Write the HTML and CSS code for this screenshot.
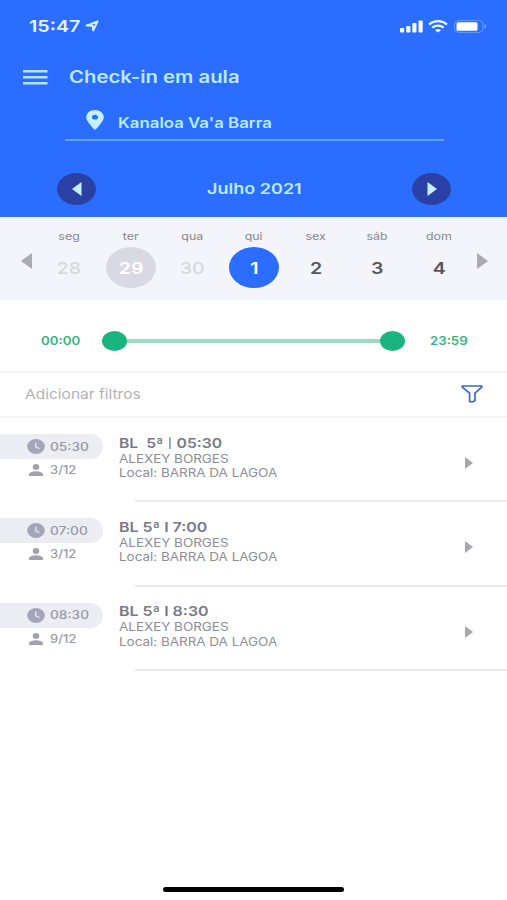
FILE: index.html
```html
<!DOCTYPE html>
<html lang="pt-BR">
<head>
<meta charset="utf-8">
<title>Check-in em aula</title>
<link rel="stylesheet" href="styles.css">
</head>
<body>
<svg width="0" height="0" class="defs">
  <symbol id="clock" viewBox="0 0 18 15" preserveAspectRatio="none"><ellipse cx="9" cy="7.5" rx="8.8" ry="7.4" fill="#a5a5ba"/><path d="M8.7 3.4v4.5l3.7 1.8" fill="none" stroke="#e4e5ee" stroke-width="1.4"/></symbol>
  <symbol id="person" viewBox="0 0 14 12"><ellipse cx="7" cy="3" rx="3.3" ry="2.9"/><path d="M0 12v-1.7C0 8.2 4.400 7.200 7 7.200s7 1 7 3.100V12z"/></symbol>
</svg>
<div class="phone">
  <header class="top">
    <div class="status">
      <span class="clock-time"><span class="t">15:47</span></span>
      <svg class="location" viewBox="0 0 14 12"><path d="M1.500 5.600 12.600 1.400 8.200 10.400 7.800 5.800z" fill="none" stroke="#d5efff" stroke-width="2" stroke-linejoin="round"/></svg>
      <svg class="signal" viewBox="0 0 24 13" fill="#f4faff"><rect x="0" y="8" width="4.200" height="4.500" rx="1"/><rect x="6.200" y="6" width="4.200" height="6.500" rx="1"/><rect x="12.300" y="3" width="4.200" height="9.500" rx="1"/><rect x="18.500" y="0.500" width="4.200" height="12" rx="1"/></svg>
      <svg class="wifi" viewBox="0 0 20 13" fill="none" stroke="#e9f6ff" stroke-width="2.300"><path d="M1 4.500C6 .1 14 .1 19 4.500M4.300 7.700c3.300-2.700 8.100-2.700 11.400 0"/><path d="M7 10.200c1.800-1.500 4.200-1.500 6 0L10 12.600z" fill="#e9f6ff" stroke="none"/></svg>
      <svg class="battery" viewBox="0 0 33 13"><rect x=".6" y=".6" width="28.500" height="11.800" rx="4" fill="none" stroke="#639bfb"/><rect x="2.500" y="2.200" width="21" height="8.600" rx="1.500" fill="#fff"/><path d="M30.500 4.300c2 .5 2 3.900 0 4.400z" fill="#79a8fb"/></svg>
    </div>
    <div class="title-row">
      <svg class="menu" viewBox="0 0 25 15" fill="#b0e5fb"><path d="M0 0h24.500v2.500H0zM0 6h24.500v2.500H0zM0 12h24.500v2.500H0z"/></svg>
      <h1 class="t">Check-in em aula</h1>
    </div>
    <div class="place">
      <svg class="pin" viewBox="0 0 18 20"><path fill="#c3efff" fill-rule="evenodd" d="M9 0C4 0 .2 3.200.2 7.300.2 12 9 20 9 20s8.800-8 8.800-12.700C17.800 3.200 14 0 9 0zm0 4.800c1.800 0 3.100 1 3.100 2.400S10.800 9.600 9 9.600 5.900 8.600 5.900 7.200 7.200 4.800 9 4.800z"/></svg>
      <span class="t">Kanaloa Va'a Barra</span>
    </div>
    <div class="month">
      <button><svg viewBox="0 0 10 14"><path d="M9.500 0v14L0 7z"/></svg></button>
      <span class="t">Julho 2021</span>
      <button><svg viewBox="0 0 10 14"><path d="M.5 0v14L10 7z"/></svg></button>
    </div>
  </header>
  <section class="week">
    <svg class="arrow" viewBox="0 0 11 16"><path d="M11 0v16L0 8z"/></svg>
    <div class="days">
      <div class="day past"><small>seg</small><b><span>28</span></b></div>
      <div class="day marked"><small>ter</small><b><span>29</span></b></div>
      <div class="day past"><small>qua</small><b><span>30</span></b></div>
      <div class="day today"><small>qui</small><b><span>1</span></b></div>
      <div class="day"><small>sex</small><b><span>2</span></b></div>
      <div class="day"><small>sáb</small><b><span>3</span></b></div>
      <div class="day"><small>dom</small><b><span>4</span></b></div>
    </div>
    <svg class="arrow" viewBox="0 0 11 16"><path d="M0 0v16l11-8z"/></svg>
  </section>
  <section class="range">
    <span class="t">00:00</span>
    <div class="slider"><i></i><i></i></div>
    <span class="t">23:59</span>
  </section>
  <section class="filters">
    <span class="t">Adicionar filtros</span>
    <svg class="funnel" viewBox="0 0 22 18"><path d="M1.200 1h19.600v1.200l-6.800 6v7.600l-3 1.200-2.400-.6V8.200L1.200 2.200z" fill="none" stroke="#3b66cf" stroke-width="1.700" stroke-linejoin="round"/></svg>
  </section>
  <main>
    <article>
      <div class="meta">
        <div class="pill"><svg><use href="#clock"/></svg><span class="t">05:30</span></div>
        <div class="people"><svg><use href="#person"/></svg><span class="t">3/12</span></div>
      </div>
      <div class="info">
        <h2><span class="t">BL&nbsp; 5ª <span class="bar">|</span> 05:30</span></h2>
        <p><span class="t">ALEXEY BORGES</span></p>
        <p><span class="t">Local: BARRA DA LAGOA</span></p>
      </div>
      <svg class="go" viewBox="0 0 8 12"><path d="M0 0v12l8-6z"/></svg>
    </article>
    <article>
      <div class="meta">
        <div class="pill"><svg><use href="#clock"/></svg><span class="t">07:00</span></div>
        <div class="people"><svg><use href="#person"/></svg><span class="t">3/12</span></div>
      </div>
      <div class="info">
        <h2 class="wide"><span class="t">BL 5ª I 7:00</span></h2>
        <p><span class="t">ALEXEY BORGES</span></p>
        <p><span class="t">Local: BARRA DA LAGOA</span></p>
      </div>
      <svg class="go" viewBox="0 0 8 12"><path d="M0 0v12l8-6z"/></svg>
    </article>
    <article>
      <div class="meta">
        <div class="pill"><svg><use href="#clock"/></svg><span class="t">08:30</span></div>
        <div class="people"><svg><use href="#person"/></svg><span class="t">9/12</span></div>
      </div>
      <div class="info">
        <h2 class="wide"><span class="t">BL 5ª I 8:30</span></h2>
        <p><span class="t">ALEXEY BORGES</span></p>
        <p><span class="t">Local: BARRA DA LAGOA</span></p>
      </div>
      <svg class="go" viewBox="0 0 8 12"><path d="M0 0v12l8-6z"/></svg>
    </article>
  </main>
  <div class="home"></div>
</div>
</body>
</html>
```
FILE: styles.css
```css
* { box-sizing: border-box; }
body { margin: 0; background: #fff; font-family: Inter, "Open Sans", sans-serif; }
h1, h2, p { margin: 0; }
svg { display: block; flex: none; }
.defs { position: absolute; }
.t { display: inline-block; white-space: nowrap; transform: scaleX(var(--sx, 1.15)); transform-origin: left center; }
.phone { width: 507px; height: 900px; display: flex; flex-direction: column; overflow: hidden; }

.top { height: 216.500px; background: #2b6dff; color: #b9eaff; flex: none; }
.status { height: 52px; padding: 0 20px 0 29px; display: flex; align-items: center; }
.clock-time { width: 56px; font-size: 16.500px; font-weight: 600; color: #e3f4ff; --sx: 1.19; }
.location { width: 14px; height: 12px; }
.signal { width: 24px; height: 13px; margin-left: auto; }
.wifi { width: 20px; height: 13px; margin-left: 4px; }
.battery { width: 33px; height: 13px; margin-left: 6px; }
.title-row { height: 50px; padding-left: 23px; display: flex; align-items: center; }
.menu { width: 25px; height: 15px; margin-right: 21px; }
h1 { font-size: 17px; line-height: 24px; font-weight: 600; --sx: 1.195; }
.place { width: 379px; height: 39px; margin-left: 65px; padding: 1px 0 2px 21px; border-bottom: 2px solid #62a2fc; display: flex; align-items: center; font-size: 14px; font-weight: 600; --sx: 1.2; }
.place .t { padding-top: 4px; }
.pin { width: 18px; height: 20px; margin-right: 14px; }
.month { height: 75px; padding: 21px 56px 0 57px; display: flex; align-items: center; justify-content: space-between; font-size: 15px; font-weight: 600; --sx: 1.2; }
.month .t { transform-origin: center; padding-bottom: 2px; }
.month button { width: 39px; height: 32px; padding: 0; border: 0; border-radius: 50%; background: #2b40a4; display: grid; place-items: center; }
.month svg { width: 10px; height: 14px; fill: #c4f0ff; }

.week { height: 83.500px; padding: 0 19px 0 21px; background: #f4f5fb; border-bottom: 1px solid #f9f9fc; display: flex; align-items: center; flex: none; }
.arrow { width: 11px; height: 16px; fill: #a9abb4; margin-top: 7px; }
.days { width: 431px; height: 83px; margin: 0 7px 0 6.500px; display: grid; grid-template-columns: repeat(7, 61.600px); flex: none; }
.day { display: flex; flex-direction: column; align-items: center; padding-top: 13px; color: #55575f; }
.day small { font-size: 10.500px; line-height: 16px; color: #85868e; transform: scaleX(1.18); }
.day b { width: 50px; height: 41px; margin-top: 2px; border-radius: 50%; display: grid; place-items: center; font-size: 16px; font-weight: 600; }
.day b span { transform: scaleX(1.22); }
.past b { color: #d6d7de; font-weight: 500; }
.marked b { background: #d9d9e4; color: #fff; }
.today b { background: #2b6dff; color: #fff; }

.range { height: 71px; padding: 11px 0 0 41px; display: flex; align-items: center; color: #35b383; font-size: 11.500px; font-weight: 600; --sx: 1.15; flex: none; }
.range > .t { width: 61px; margin-top: -1px; }
.range > .t:last-child { margin-left: 24.500px; }
.slider { width: 303px; height: 20px; display: flex; justify-content: space-between; background: linear-gradient(#9bdbc3, #9bdbc3) center / 280px 4px no-repeat; }
.slider i { width: 25px; height: 20px; border-radius: 50%; background: #19b47f; }

.filters { height: 47px; border-top: 2px solid #f5f5f7; border-bottom: 2px solid #f5f5f7; padding: 0 24px 0 25px; display: flex; align-items: center; justify-content: space-between; color: #b1b1b6; font-size: 13.500px; flex: none; }
.filters .t { padding-bottom: 1px; }
.funnel { width: 22px; height: 18px; margin-top: -1px; }

main { flex: 1; }
article { height: 84.400px; display: flex; background: linear-gradient(#ebebef, #ebebef) 135px 100% / 372px 2px no-repeat; }
.meta { width: 119px; padding-top: 16px; color: #9899a6; font-size: 11.500px; font-weight: 500; --sx: 1.19; }
.pill { width: 103px; height: 25px; padding-left: 27px; border-radius: 0 13px 13px 0; background: #ecedf3; display: flex; align-items: center; }
.pill svg { width: 18px; height: 15px; margin-right: 5px; }
.people { height: 22px; padding-left: 29px; display: flex; align-items: center; }
.people .t { --sx: 1.13; }
.people svg { width: 14px; height: 12px; fill: #a1a2ae; margin-right: 7px; }
.info { flex: 1; padding-top: 16.600px; color: #8d8e97; --sx: 1.19; }
h2 { font-size: 13.200px; line-height: 17px; font-weight: 600; color: #777983; --sx: 1.19; }
.wide { --sx: 1.21; }
.bar { display: inline-block; font-weight: 400; transform: translateY(.5px) scaleY(.75); }
.info p { font-size: 11.300px; line-height: 14.300px; }
.go { width: 8px; height: 12px; margin: 39px 34px 0 0; fill: #a6a7ac; }

.home { width: 181px; height: 5px; margin: 0 auto 8px; border-radius: 3px; background: #000; flex: none; }
```
